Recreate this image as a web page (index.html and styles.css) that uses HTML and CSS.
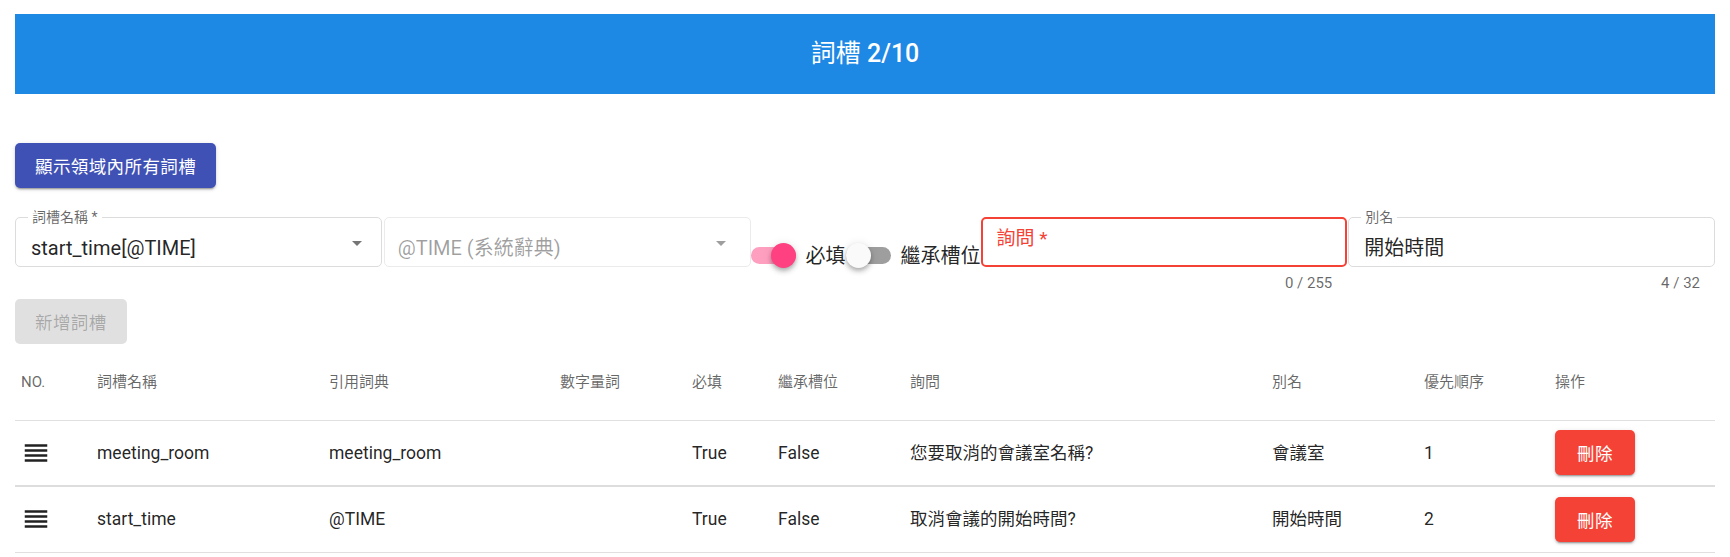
FILE: index.html
```html
<!DOCTYPE html>
<html lang="zh-Hant">
<head>
<meta charset="utf-8">
<title>詞槽</title>
<link rel="stylesheet" href="styles.css">
</head>
<body>
<div class="app">
  <header class="toolbar">
    <span class="title"><span class="cjk">詞槽</span> 2/10</span>
  </header>

  <div class="actions">
    <button class="btn btn-primary">顯示領域內所有詞槽</button>
  </div>

  <div class="form-row">
    <div class="field field-name">
      <div class="outline">
        <span class="float-label">詞槽名稱 *</span>
        <span class="value">start_time[@TIME]</span>
        <span class="arrow"></span>
      </div>
    </div>

    <div class="field field-dict">
      <div class="outline">
        <span class="value placeholder">@TIME (系統辭典)</span>
        <span class="arrow"></span>
      </div>
    </div>

    <div class="switches">
      <div class="switch on">
        <span class="track"></span>
        <span class="thumb"></span>
      </div>
      <span class="switch-label">必填</span>
      <div class="switch off">
        <span class="track"></span>
        <span class="thumb"></span>
      </div>
      <span class="switch-label">繼承槽位</span>
    </div>

    <div class="field field-ask">
      <div class="outline error">
        <span class="error-label">詢問 *</span>
      </div>
      <div class="details">0 / 255</div>
    </div>

    <div class="field field-alias">
      <div class="outline">
        <span class="float-label">別名</span>
        <span class="value">開始時間</span>
      </div>
      <div class="details">4 / 32</div>
    </div>
  </div>

  <div class="add-row">
    <button class="btn btn-disabled" disabled>新增詞槽</button>
  </div>

  <table class="slots">
    <colgroup>
      <col class="c-no">
      <col class="c-name">
      <col class="c-dict">
      <col class="c-num">
      <col class="c-req">
      <col class="c-inh">
      <col class="c-ask">
      <col class="c-alias">
      <col class="c-pri">
      <col class="c-op">
    </colgroup>
    <thead>
      <tr>
        <th>NO.</th>
        <th>詞槽名稱</th>
        <th>引用詞典</th>
        <th>數字量詞</th>
        <th>必填</th>
        <th>繼承槽位</th>
        <th>詢問</th>
        <th>別名</th>
        <th>優先順序</th>
        <th>操作</th>
      </tr>
    </thead>
    <tbody>
      <tr class="row-first">
        <td><svg class="drag" viewBox="0 0 24 24" width="30" height="30"><path d="M3 15h18v-2H3v2zm0 4h18v-2H3v2zm0-8h18V9H3v2zm0-6v2h18V5H3z"/></svg></td>
        <td>meeting_room</td>
        <td>meeting_room</td>
        <td></td>
        <td>True</td>
        <td>False</td>
        <td>您要取消的會議室名稱?</td>
        <td>會議室</td>
        <td>1</td>
        <td><button class="btn btn-danger">刪除</button></td>
      </tr>
      <tr>
        <td><svg class="drag" viewBox="0 0 24 24" width="30" height="30"><path d="M3 15h18v-2H3v2zm0 4h18v-2H3v2zm0-8h18V9H3v2zm0-6v2h18V5H3z"/></svg></td>
        <td>start_time</td>
        <td>@TIME</td>
        <td></td>
        <td>True</td>
        <td>False</td>
        <td>取消會議的開始時間?</td>
        <td>開始時間</td>
        <td>2</td>
        <td><button class="btn btn-danger">刪除</button></td>
      </tr>
    </tbody>
  </table>
</div>
</body>
</html>
```

FILE: styles.css
```css
* { box-sizing: border-box; }

html, body {
  margin: 0;
  padding: 0;
  background: #ffffff;
}

body {
  font-family: "Roboto", "Noto Sans CJK TC", sans-serif;
  color: rgba(0, 0, 0, 0.87);
}

.app {
  padding: 14px 15px 0;
}

/* Toolbar */
.toolbar {
  height: 80px;
  background: #1e88e5;
  display: flex;
  align-items: center;
  justify-content: center;
  color: #ffffff;
}

.title {
  font-size: 25px;
  font-weight: 500;
  line-height: 30px;
}

.title .cjk {
  font-weight: 400;
}

/* Buttons */
.btn {
  font-family: "Roboto", "Noto Sans CJK TC", sans-serif;
  font-size: 17.5px;
  letter-spacing: 0.4px;
  height: 45px;
  min-width: 80px;
  padding: 0 20px;
  border: 0;
  border-radius: 5px;
  cursor: pointer;
  display: inline-flex;
  align-items: center;
  justify-content: center;
}

.btn-primary {
  background: #3f51b5;
  color: #ffffff;
  box-shadow: 0 3px 1px -2px rgba(0,0,0,.2), 0 2px 2px 0 rgba(0,0,0,.14), 0 1px 5px 0 rgba(0,0,0,.12);
}

.btn-disabled {
  background: #e0e0e0;
  color: rgba(0, 0, 0, 0.26);
  cursor: default;
}

.btn-danger {
  background: #f44336;
  color: #ffffff;
  box-shadow: 0 3px 1px -2px rgba(0,0,0,.2), 0 2px 2px 0 rgba(0,0,0,.14), 0 1px 5px 0 rgba(0,0,0,.12);
}

.actions {
  margin-top: 49px;
  display: flex;
}

/* Form row */
.form-row {
  margin-top: 29px;
  display: flex;
  align-items: flex-start;
}

.field {
  flex: 1 1 0;
  min-width: 0;
}

.field-name { margin-right: 2px; }
.field-ask { margin-right: 1px; }

.outline {
  position: relative;
  height: 50px;
  border: 1px solid #dcdcdc;
  border-radius: 5px;
  display: flex;
  align-items: flex-start;
  padding: 18px 15px 0;
}

.field-dict .outline {
  border-color: #ebebeb;
  padding-left: 13px;
}

.outline.error {
  border: 2px solid #f44336;
  align-items: center;
  padding: 0 14px;
}

.float-label {
  position: absolute;
  top: -9px;
  left: 12px;
  padding: 0 4px;
  background: #ffffff;
  font-size: 14px;
  line-height: 16px;
  color: rgba(0, 0, 0, 0.6);
}

.value {
  flex: 1;
  font-size: 20px;
  line-height: 24px;
  white-space: nowrap;
}

.placeholder {
  color: rgba(0, 0, 0, 0.38);
}

.arrow {
  width: 0;
  height: 0;
  margin-top: 5px;
  margin-right: 4px;
  border-left: 5px solid transparent;
  border-right: 5px solid transparent;
  border-top: 5px solid rgba(0, 0, 0, 0.54);
}

.field-dict .arrow {
  border-top-color: rgba(0, 0, 0, 0.38);
  margin-right: 9px;
}

.error-label {
  font-size: 19px;
  line-height: 24px;
  margin-top: -6px;
  color: #f44336;
}

.details {
  padding: 9px 15px 0;
  height: 24px;
  font-size: 15px;
  line-height: 15px;
  text-align: right;
  color: rgba(0, 0, 0, 0.6);
}

/* Switches */
.switches {
  width: 230px;
  flex: 0 0 230px;
  display: flex;
  align-items: center;
  margin-top: 26px;
  height: 25px;
}

.switch {
  position: relative;
  width: 45px;
  height: 25px;
  flex: 0 0 45px;
  display: flex;
  align-items: center;
}

.switch .track {
  width: 45px;
  height: 17px;
  border-radius: 9px;
}

.switch .thumb {
  position: absolute;
  top: 0;
  width: 25px;
  height: 25px;
  border-radius: 50%;
  box-shadow: 0 2px 4px -1px rgba(0,0,0,.2), 0 4px 5px 0 rgba(0,0,0,.14), 0 1px 10px 0 rgba(0,0,0,.12);
}

.switch.on .track { background: #ff9fc0; }
.switch.on .thumb { right: 0; background: #ff4081; }

.switch.off .track { background: #9e9e9e; }
.switch.off .thumb { left: 0; background: #fafafa; }

.switch-label {
  font-size: 20px;
  line-height: 24px;
  margin-left: 10px;
  white-space: nowrap;
  color: rgba(0, 0, 0, 0.87);
}

.add-row {
  margin-top: 8px;
  display: flex;
}

/* Table */
.slots {
  margin-top: 15px;
  width: 1700px;
  table-layout: fixed;
  border-collapse: collapse;
  border-spacing: 0;
}

.c-no { width: 76px; }
.c-name { width: 232px; }
.c-dict { width: 231px; }
.c-num { width: 132px; }
.c-req { width: 86px; }
.c-inh { width: 132px; }
.c-ask { width: 362px; }
.c-alias { width: 152px; }
.c-pri { width: 131px; }
.c-op { width: 166px; }

.slots th {
  height: 61px;
  padding: 15px 0 0 6px;
  vertical-align: top;
  text-align: left;
  font-size: 15px;
  line-height: 17px;
  font-weight: 400;
  color: rgba(0, 0, 0, 0.6);
  border-bottom: 1px solid #e0e0e0;
  white-space: nowrap;
}

.slots td {
  height: 66px;
  padding: 0 0 0 6px;
  vertical-align: middle;
  font-size: 17.5px;
  line-height: 22px;
  color: rgba(0, 0, 0, 0.87);
  border-bottom: 1px solid #e0e0e0;
  white-space: nowrap;
}

.slots .row-first td {
  border-bottom: 2px solid #dddddd;
}

.drag {
  display: block;
  fill: rgba(0, 0, 0, 0.87);
}
```
